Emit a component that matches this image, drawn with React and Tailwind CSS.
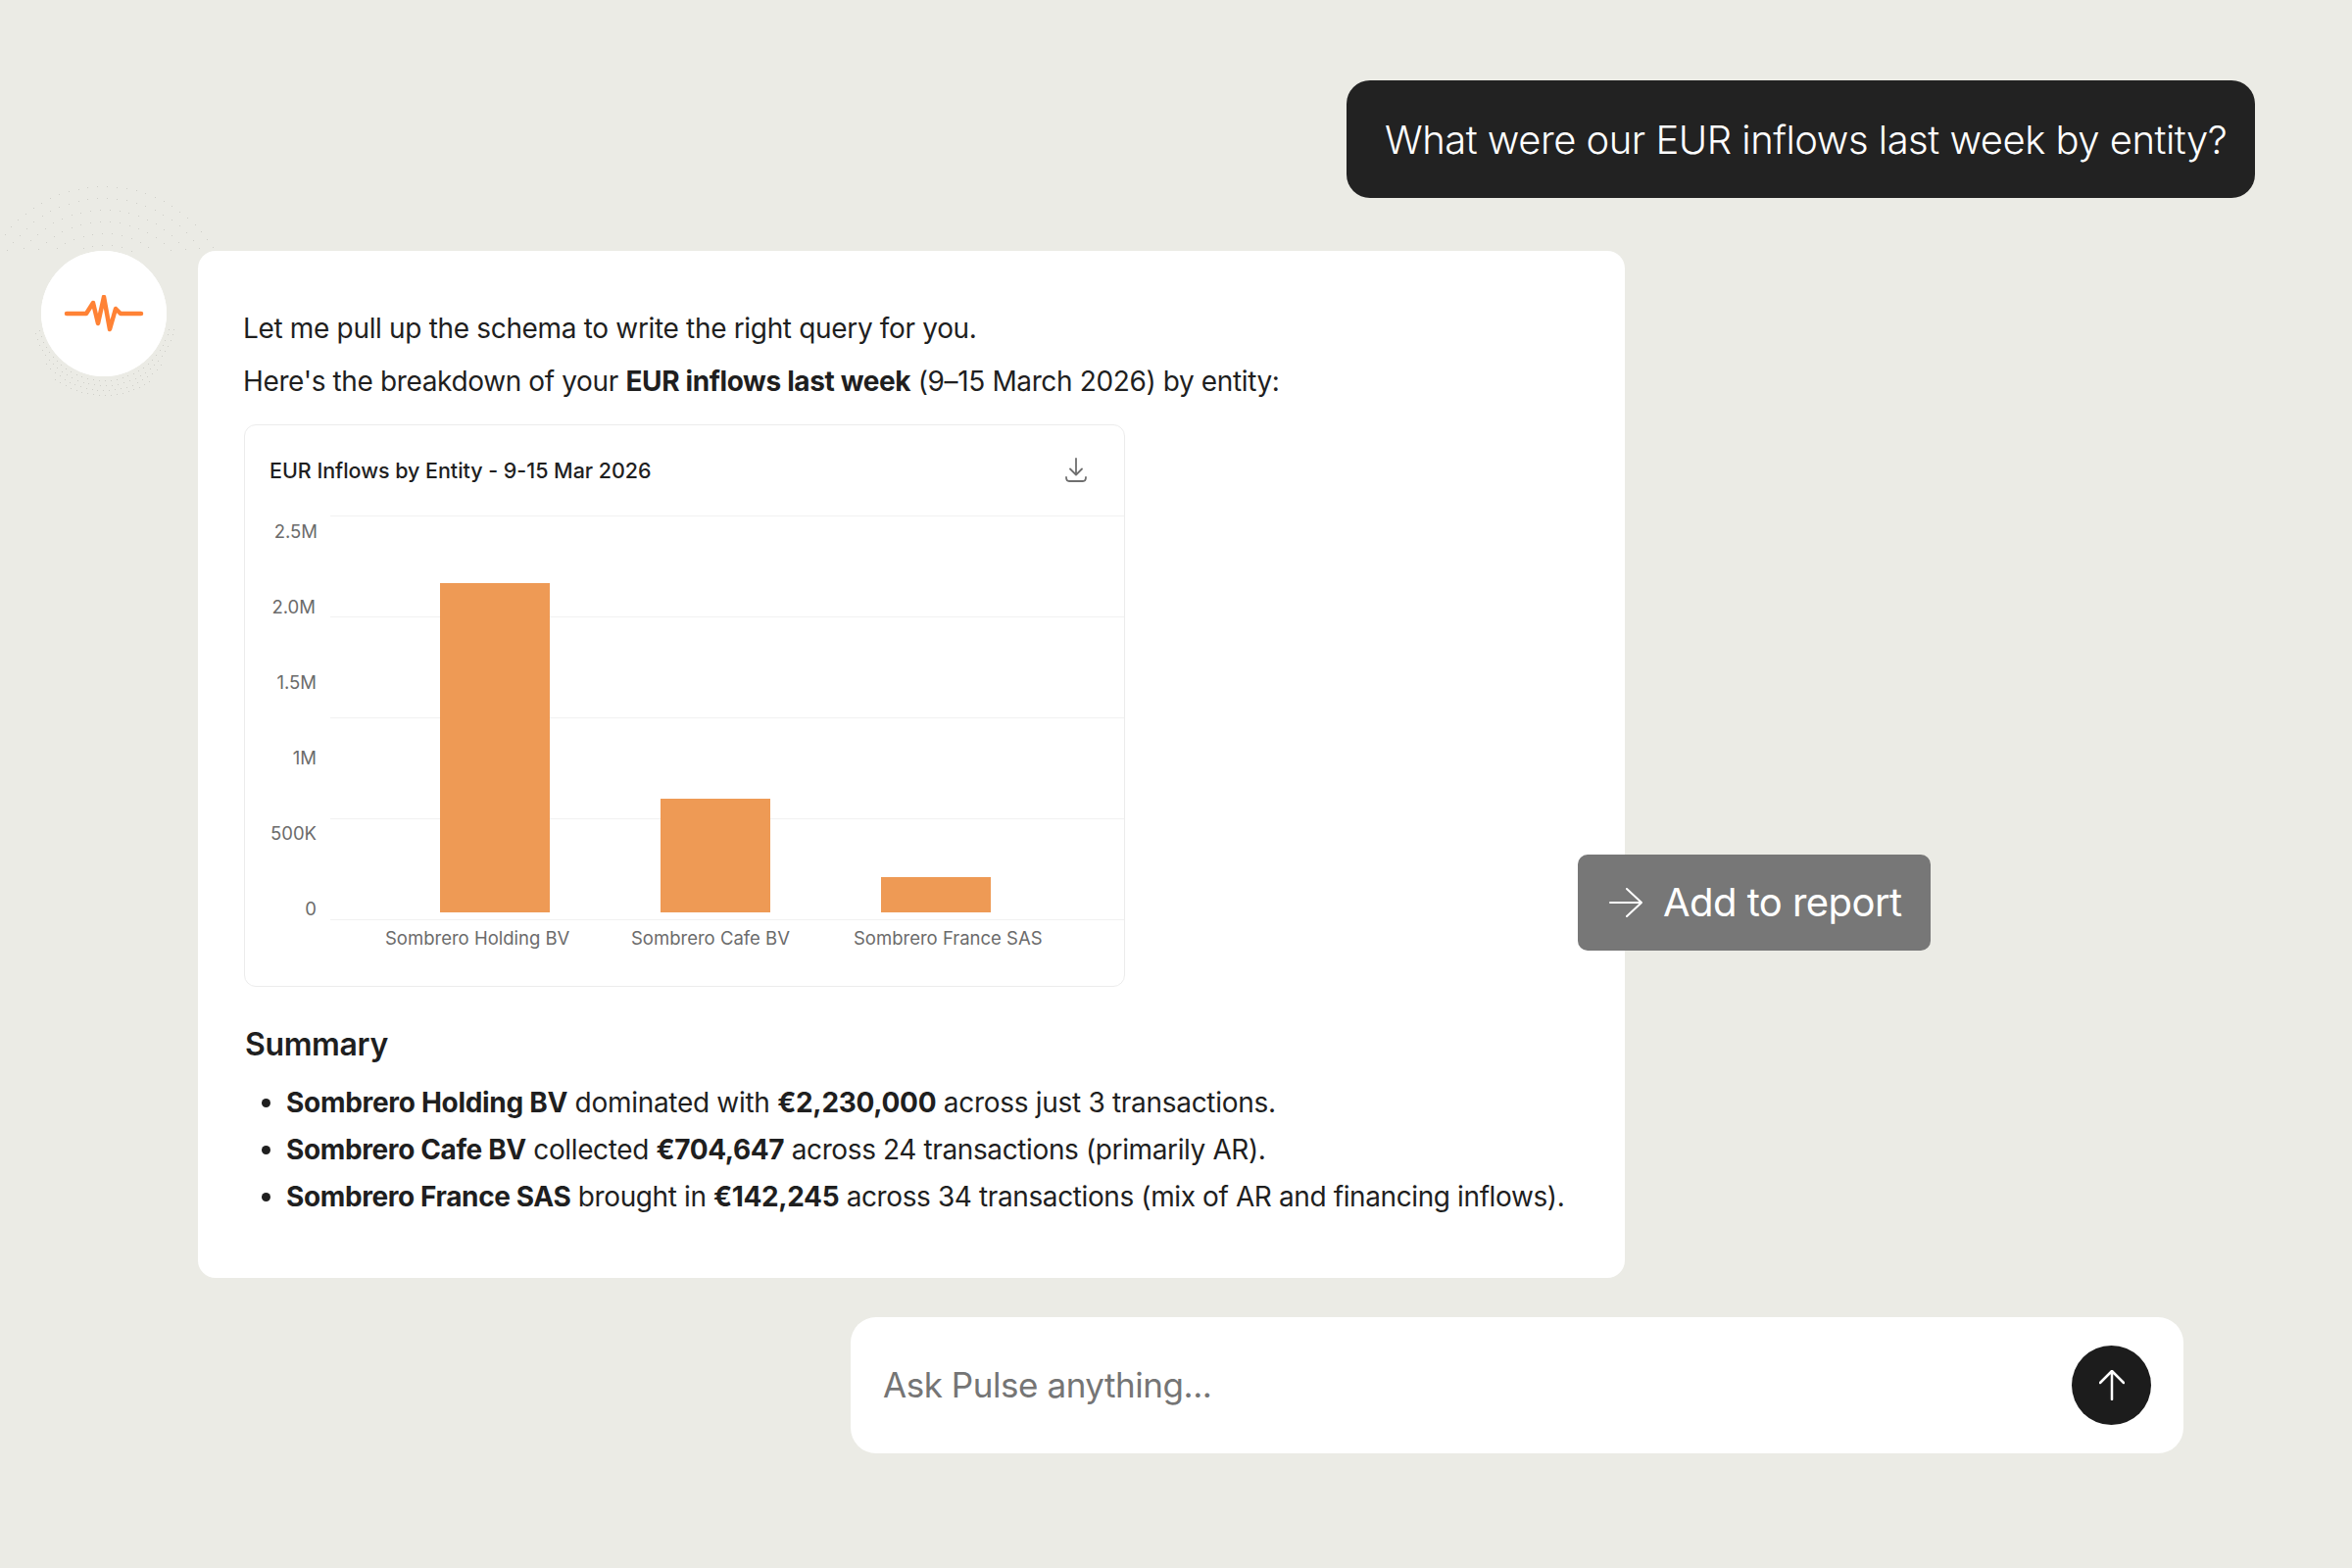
const yTicks = [
    { label: "2.5M", x: 324, y: 550 },
    { label: "2.0M", x: 322, y: 627 },
    { label: "1.5M", x: 323, y: 704 },
    { label: "1M", x: 323, y: 781 },
    { label: "500K", x: 323, y: 858 },
    { label: "0", x: 323, y: 935 },
];
const gridLines = [527, 630, 733, 836, 939];
const bars = [
    { x: 449, y: 596, w: 112, h: 336 },
    { x: 674, y: 816, w: 112, h: 116 },
    { x: 899, y: 896, w: 112, h: 36 },
];
const xLabels = [
    { label: "Sombrero Holding BV", x: 393 },
    { label: "Sombrero Cafe BV", x: 644 },
    { label: "Sombrero France SAS", x: 871 },
];

// faint halftone rings around the avatar: the upper lens and the lower crescent
const haloDots = [];
[70, 82, 94, 106, 118, 130].forEach(r => {
    const count = Math.round((2 * Math.PI * r) / 10);
    for (let i = 0; i < count; i++) {
        const rad = ((i + r / 12) * 2 * Math.PI) / count;
        const x = r * Math.cos(rad);
        const y = r * Math.sin(rad);
        if (y < -64) haloDots.push({ x: Math.round(140 + x), y: Math.round(140 + y) });
    }
});
[68, 73, 78, 83].forEach(r => {
    const count = Math.round((2 * Math.PI * r) / 6);
    for (let i = 0; i < count; i++) {
        const rad = ((i + r / 5) * 2 * Math.PI) / count;
        const x = r * Math.cos(rad);
        const y = r * Math.sin(rad);
        const limit = r === 83 ? 66 : r === 78 ? 50 : 15;
        if (y > limit) haloDots.push({ x: Math.round(140 + x), y: Math.round(140 + y) });
    }
});

function Avatar() {
    return (
        <div className="relative flex h-[128px] w-[128px] shrink-0 items-center justify-center rounded-full bg-white">
            <svg width="280" height="280" viewBox="0 0 280 280" className="absolute left-[-76px] top-[-76px]">
                {haloDots.map((d, i) => (
                    <rect key={i} x={d.x} y={d.y} width="1" height="1" fill="#cfcfc9" />
                ))}
                <circle cx="140" cy="140" r="64" fill="white" />
            </svg>
            <svg width="84" height="38" viewBox="0 0 84 38" fill="none" className="relative">
                <path
                    d="M4 19 H24 L31 8 L36 29 L42 2 L48 35 L54 14 L59 19 H80"
                    stroke="#FF8235"
                    strokeWidth="4.5"
                    strokeLinecap="round"
                    strokeLinejoin="round"
                />
            </svg>
        </div>
    );
}

function Chart() {
    return (
        <div className="ml-[1px] mt-[17px] h-[574px] w-[899px] rounded-[12px] border border-[#ececec] bg-white tracking-normal">
            <div className="flex h-[92px] items-center justify-between pl-[25px] pr-[38px]">
                <span className="text-[21.5px] font-medium tracking-[-0.04px] text-[#1f1f1f]">EUR Inflows by Entity - 9-15 Mar 2026</span>
                <svg width="22" height="26" viewBox="0 0 22 26" fill="none" stroke="#6f6f6f" strokeWidth="1.8" strokeLinecap="round" strokeLinejoin="round">
                    <path d="M11 1 V17 M5 11.5 L11 17.5 L17 11.5" />
                    <path d="M1 20 C1 23 2 24 4 24 H18 C20 24 21 23 21 20" />
                </svg>
            </div>
            <svg width="897" height="480" viewBox="250 527 897 480" className="block">
                {gridLines.map(y => (
                    <line key={y} x1="337" x2="1147" y1={y + 0.5} y2={y + 0.5} stroke="#f1f1f1" />
                ))}
                {bars.map(b => (
                    <rect key={b.x} x={b.x} y={b.y} width={b.w} height={b.h} fill="#EE9A55" />
                ))}
                {yTicks.map(t => (
                    <text key={t.label} x={t.x} y={t.y} textAnchor="end" fontSize="18.5" fill="#6b6b6b">
                        {t.label}
                    </text>
                ))}
                {xLabels.map(t => (
                    <text key={t.label} x={t.x} y={965} fontSize="18.5" fill="#6b6b6b">
                        {t.label}
                    </text>
                ))}
            </svg>
        </div>
    );
}

export default function App() {
    return (
        <div className="relative h-[1600px] w-[2400px] overflow-hidden bg-[#EBEBE5] font-['Inter',sans-serif]">
            <div className="flex justify-end pr-[99px] pt-[82px]">
                <div className="flex h-[120px] w-[927px] items-center whitespace-nowrap rounded-[24px] bg-[#222222] pl-[39px] pt-[2px] text-[40px] font-light tracking-[-0.5px] text-white">
                    What were our EUR inflows last week by entity?
                </div>
            </div>

            <div className="mt-[54px] flex gap-[32px] pl-[42px]">
                <Avatar />
                <div className="relative h-[1048px] w-[1456px] rounded-[18px] bg-white px-[46px] pt-[52px] text-[28px] tracking-[-0.37px] text-[#1f1f1f]">
                    <p className="leading-[54px] tracking-[-0.33px]">Let me pull up the schema to write the right query for you.</p>
                    <p className="leading-[54px]">
                        Here's the breakdown of your <b className="font-bold">EUR inflows last week</b> (9–15 March 2026) by entity:
                    </p>
                    <Chart />
                    <h3 className="ml-[2px] mt-[35px] text-[32px] font-semibold leading-[48px]">Summary</h3>
                    <ul className="ml-[44px] mt-[11px] list-disc whitespace-nowrap leading-[48px]">
                        <li className="tracking-[-0.3px]"><b className="font-bold">Sombrero Holding BV</b> dominated with <b className="font-bold">€2,230,000</b> across just 3 transactions.</li>
                        <li className="tracking-[-0.38px]"><b className="font-bold">Sombrero Cafe BV</b> collected <b className="font-bold">€704,647</b> across 24 transactions (primarily AR).</li>
                        <li className="tracking-[-0.39px]"><b className="font-bold">Sombrero France SAS</b> brought in <b className="font-bold">€142,245</b> across 34 transactions (mix of AR and financing inflows).</li>
                    </ul>
                </div>
            </div>

            <div className="ml-[868px] mt-[40px] flex h-[139px] w-[1360px] items-center justify-between rounded-[26px] bg-white pl-[33px] pr-[33px]">
                <span className="text-[35px] tracking-[-0.45px] text-[#757575]">Ask Pulse anything...</span>
                <div className="flex h-[81px] w-[81px] items-center justify-center rounded-full bg-[#1c1c1c]">
                    <svg width="26" height="31" viewBox="0 0 26 31" fill="none" stroke="white" strokeWidth="2.5" strokeLinecap="round" strokeLinejoin="round">
                        <path d="M1 13 L13 1 L25 13 M13 1 V30" />
                    </svg>
                </div>
            </div>

            <div className="absolute left-[1610px] top-[872px] flex h-[98px] w-[360px] items-center gap-[21px] rounded-[10px] bg-[#777777] pl-[32px] text-[40px] tracking-[-0.55px] text-white">
                <svg width="34" height="30" viewBox="0 0 34 30" fill="none" stroke="white" strokeWidth="2" strokeLinecap="round" strokeLinejoin="round">
                    <path d="M1 15 H33 M18 1 L33 15 L18 29" />
                </svg>
                Add to report
            </div>
        </div>
    );
}
